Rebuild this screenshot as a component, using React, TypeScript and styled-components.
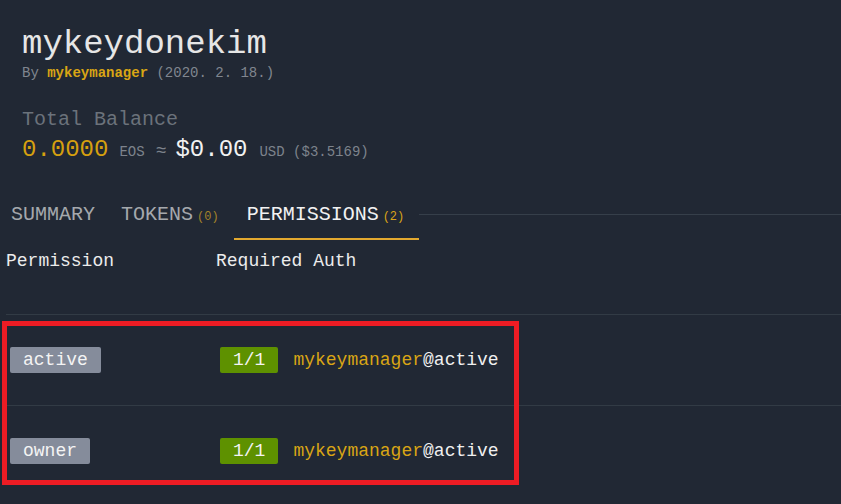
import styled, { createGlobalStyle } from "styled-components"

const GlobalStyle = createGlobalStyle`
  html, body {
    margin: 0;
    padding: 0;
    background: #212834;
  }
  body {
    font-family: "Liberation Mono", "Courier New", monospace;
    color: #e8e8e8;
    overflow: hidden;
  }
`

const Page = styled.div`
  width: 841px;
  height: 504px;
  overflow: hidden;
`

const Header = styled.header`
  padding: 24px 0 0 22px;
`

const Title = styled.h1`
  margin: 0;
  font-size: 34px;
  line-height: 40px;
  font-weight: normal;
  color: #e6e6e6;
`

const Byline = styled.div`
  font-size: 14px;
  line-height: 18px;
  color: #80868f;
`

const Owner = styled.span`
  color: #d9a514;
  font-weight: bold;
`

const BalanceLabel = styled.div`
  margin-top: 26px;
  font-size: 20px;
  line-height: 24px;
  color: #6b727b;
`

const BalanceLine = styled.div`
  margin-top: 4px;
  display: flex;
  align-items: baseline;
`

const Big = styled.span<{ $gold?: boolean; $gap?: number }>`
  font-size: 24px;
  line-height: 28px;
  color: ${({ $gold }) => ($gold ? "#d6a00f" : "#f2f2f2")};
  margin-left: ${({ $gap }) => $gap ?? 0}px;
`

const Small = styled.span<{ $gap?: number; $size?: number }>`
  font-size: ${({ $size }) => $size ?? 14}px;
  line-height: 18px;
  color: #7d838c;
  margin-left: ${({ $gap }) => $gap ?? 0}px;
`

const TabBar = styled.nav`
  display: flex;
  margin: 39px 0 0 -2px;
`

const Tab = styled.div<{ $active?: boolean }>`
  padding: 0 13px 9px;
  font-size: 20px;
  line-height: 24px;
  color: ${({ $active }) => ($active ? "#f2f2f2" : "#a5a8ad")};
  border-bottom: 2px solid ${({ $active }) => ($active ? "#e3a92f" : "transparent")};
  white-space: nowrap;
`

const Count = styled.span<{ $active?: boolean }>`
  font-size: 12px;
  margin: 0 2px 0 4px;
  color: ${({ $active }) => ($active ? "#d9a318" : "#a3822a")};
`

const TabFill = styled.div`
  flex: 1;
  align-self: flex-start;
  height: 11px;
  border-bottom: 1px solid #363f4a;
`

const Table = styled.section`
  margin: 10px 0 0 6px;
`

const HeadRow = styled.div`
  display: grid;
  grid-template-columns: 210px 1fr;
  height: 64px;
  border-bottom: 1px solid #323b45;
  font-size: 18px;
  line-height: 22px;
  color: #ececec;
`

const Body = styled.div`
  position: relative;
`

const Row = styled.div<{ $last?: boolean }>`
  display: grid;
  grid-template-columns: 210px 1fr;
  align-items: center;
  height: 90px;
  border-bottom: 1px solid ${({ $last }) => ($last ? "transparent" : "#323b45")};
  font-size: 18px;
`

const Cell = styled.div`
  display: flex;
  align-items: center;
  padding-left: 4px;
`

const Badge = styled.span<{ $tone: "gray" | "green" }>`
  display: inline-block;
  height: 26px;
  line-height: 26px;
  padding: 0 13px;
  border-radius: 2px;
  background: ${({ $tone }) => ($tone === "green" ? "#5e9100" : "#858c9b")};
  color: #f4f4f4;
`

const Auth = styled.span`
  margin-left: 15px;
  color: #f0f0f0;
`

const Account = styled.span`
  color: #d9a514;
`

const Highlight = styled.div`
  position: absolute;
  left: -4px;
  top: 6px;
  width: 517px;
  height: 164px;
  box-sizing: border-box;
  border: 5px solid #ed1c24;
  pointer-events: none;
`

const permissions = [
  { name: "active", threshold: "1/1", actor: "mykeymanager", perm: "active" },
  { name: "owner", threshold: "1/1", actor: "mykeymanager", perm: "active" },
]

export default function App() {
  return (
    <Page>
      <GlobalStyle />
      <Header>
        <Title>mykeydonekim</Title>
        <Byline>
          By <Owner>mykeymanager</Owner> (2020. 2. 18.)
        </Byline>
        <BalanceLabel>Total Balance</BalanceLabel>
        <BalanceLine>
          <Big $gold>0.0000</Big>
          <Small $gap={11}>EOS</Small>
          <Small $gap={11} $size={18}>≈</Small>
          <Big $gap={9}>$0.00</Big>
          <Small $gap={12}>USD ($3.5169)</Small>
        </BalanceLine>
      </Header>

      <TabBar>
        <Tab>SUMMARY</Tab>
        <Tab>
          TOKENS<Count>(0)</Count>
        </Tab>
        <Tab $active>
          PERMISSIONS<Count $active>(2)</Count>
        </Tab>
        <TabFill />
      </TabBar>

      <Table>
        <HeadRow>
          <div>Permission</div>
          <div>Required Auth</div>
        </HeadRow>
        <Body>
          {permissions.map((p, i) => (
            <Row key={p.name} $last={i === permissions.length - 1}>
              <Cell>
                <Badge $tone="gray">{p.name}</Badge>
              </Cell>
              <Cell>
                <Badge $tone="green">{p.threshold}</Badge>
                <Auth>
                  <Account>{p.actor}</Account>@{p.perm}
                </Auth>
              </Cell>
            </Row>
          ))}
          <Highlight />
        </Body>
      </Table>
    </Page>
  )
}
